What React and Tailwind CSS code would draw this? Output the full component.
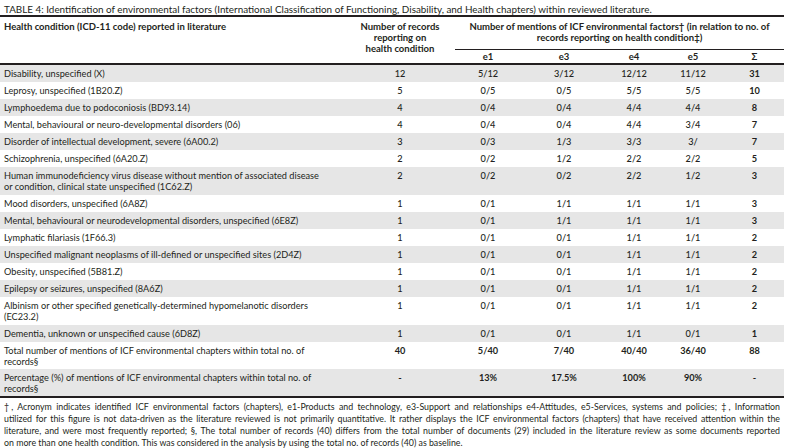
import React from 'react';

const rows = [
  ['Disability, unspecified (X)', '12', '5/12', '3/12', '12/12', '11/12', '31'],
  ['Leprosy, unspecified (1B20.Z)', '5', '0/5', '0/5', '5/5', '5/5', '10'],
  ['Lymphoedema due to podoconiosis (BD93.14)', '4', '0/4', '0/4', '4/4', '4/4', '8'],
  ['Mental, behavioural or neuro-developmental disorders (06)', '4', '0/4', '0/4', '4/4', '3/4', '7'],
  ['Disorder of intellectual development, severe (6A00.2)', '3', '0/3', '1/3', '3/3', '3/', '7'],
  ['Schizophrenia, unspecified (6A20.Z)', '2', '0/2', '1/2', '2/2', '2/2', '5'],
  ['Human immunodeficiency virus disease without mention of associated disease\nor condition, clinical state unspecified (1C62.Z)', '2', '0/2', '0/2', '2/2', '1/2', '3'],
  ['Mood disorders, unspecified (6A8Z)', '1', '0/1', '1/1', '1/1', '1/1', '3'],
  ['Mental, behavioural or neurodevelopmental disorders, unspecified (6E8Z)', '1', '0/1', '1/1', '1/1', '1/1', '3'],
  ['Lymphatic filariasis (1F66.3)', '1', '0/1', '0/1', '1/1', '1/1', '2'],
  ['Unspecified malignant neoplasms of ill-defined or unspecified sites (2D4Z)', '1', '0/1', '0/1', '1/1', '1/1', '2'],
  ['Obesity, unspecified (5B81.Z)', '1', '0/1', '0/1', '1/1', '1/1', '2'],
  ['Epilepsy or seizures, unspecified (8A6Z)', '1', '0/1', '0/1', '1/1', '1/1', '2'],
  ['Albinism or other specified genetically-determined hypomelanotic disorders\n(EC23.2)', '1', '0/1', '0/1', '1/1', '1/1', '2'],
  ['Dementia, unknown or unspecified cause (6D8Z)', '1', '0/1', '0/1', '1/1', '0/1', '1'],
];

const totals = [
  ['Total number of mentions of ICF environmental chapters within total no. of\nrecords§', '40', '5/40', '7/40', '40/40', '36/40', '88'],
  ['Percentage (%) of mentions of ICF environmental chapters within total no. of\nrecords§', '-', '13%', '17.5%', '100%', '90%', '-'],
];

export default function App() {
  return (
    <div className="w-[794px] h-[448px] bg-white text-[#231f20] overflow-hidden" style={{ fontFamily: 'Lato, "Liberation Sans", sans-serif' }}>
      <div className="w-[784px]">
        {/* caption */}
        <div className="px-[4px] pt-[3px] text-[9.9px] leading-[12px] border-b-2 border-[#231f20]">
          TABLE 4: Identification of environmental factors (International Classification of Functioning, Disability, and Health chapters) within reviewed literature.
        </div>

        <table className="table-fixed w-[784px] border-collapse text-[9.2px] leading-[11px]">
          <colgroup>
            <col className="w-[345px]" />
            <col className="w-[110px]" />
            <col className="w-[66px]" />
            <col className="w-[86px]" />
            <col className="w-[54px]" />
            <col className="w-[64px]" />
            <col className="w-[59px]" />
          </colgroup>
          <thead className="font-bold text-[9.5px]">
            <tr>
              <th rowSpan={2} className="text-left align-top px-[4px] pt-[4px] border-b-2 border-[#231f20]">
                Health condition (ICD-11 code) reported in literature
              </th>
              <th rowSpan={2} className="text-center align-top px-[4px] pt-[4px] border-b-2 border-[#231f20]">
                Number of records<br />reporting on<br />health condition
              </th>
              <th colSpan={5} className="text-center align-top px-[4px] pt-[4px] pb-[6px] border-b border-[#231f20]">
                Number of mentions of ICF environmental factors† (in relation to no. of records reporting on health condition‡)
              </th>
            </tr>
            <tr>
              {['e1', 'e3', 'e4', 'e5', 'Σ'].map((h) => (
                <th key={h} className="text-center pt-[1px] pb-[1px] border-b-2 border-[#231f20]">{h}</th>
              ))}
            </tr>
          </thead>
          <tbody>
            {rows.map((r, i) => (
              <tr key={r[0]} className={i % 2 === 0 ? 'bg-[#e6e6e6]' : 'bg-white'}>
                <td className="align-top pl-[4px] py-[3px] pr-[6px] whitespace-pre-line">{r[0]}</td>
                {r.slice(1).map((v, j) => (
                  <td key={j} className={`align-top text-center py-[3px] ${j === 5 ? 'font-bold' : 'font-medium'}`}>{v}</td>
                ))}
              </tr>
            ))}
            {totals.map((r, i) => (
              <tr key={r[0]} className={i === 1 ? 'bg-[#e6e6e6] border-b-2 border-[#231f20]' : 'bg-white'}>
                <td className="align-top pl-[4px] pt-[3px] pb-[2px] pr-[6px] whitespace-pre-line">{r[0]}</td>
                {r.slice(1).map((v, j) => (
                  <td key={j} className="align-top text-center pt-[3px] pb-[2px] font-bold">{v}</td>
                ))}
              </tr>
            ))}
          </tbody>
        </table>

        {/* footnote */}
        <div className="px-[4px] pt-[3px] text-[8.8px] leading-[12px]">
          <div className="text-justify [text-align-last:justify]">†, Acronym indicates identified ICF environmental factors (chapters), e1-Products and technology, e3-Support and relationships e4-Attitudes, e5-Services, systems and policies; ‡, Information</div>
          <div className="text-justify [text-align-last:justify]">utilized for this figure is not data-driven as the literature reviewed is not primarily quantitative. It rather displays the ICF environmental factors (chapters) that have received attention within the</div>
          <div className="text-justify [text-align-last:justify]">literature, and were most frequently reported; §, The total number of records (40) differs from the total number of documents (29) included in the literature review as some documents reported</div>
          <div>on more than one health condition. This was considered in the analysis by using the total no. of records (40) as baseline.</div>
        </div>
      </div>
    </div>
  );
}
